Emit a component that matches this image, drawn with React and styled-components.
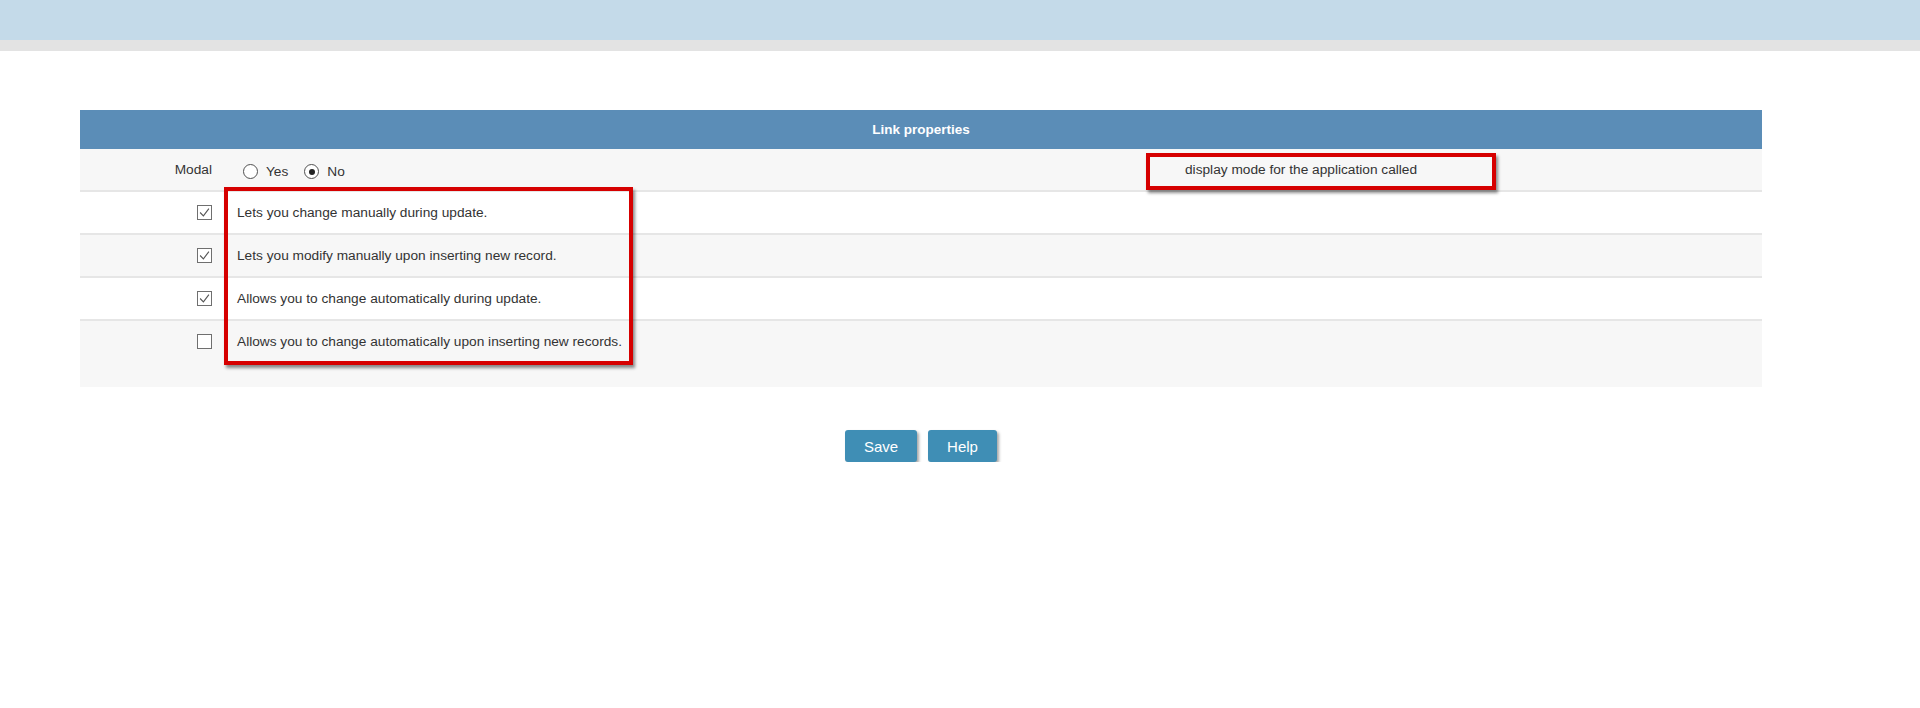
import React from 'react'
import styled, { createGlobalStyle } from 'styled-components'

const GlobalStyle = createGlobalStyle`
  body {
    margin: 0;
    background: #ffffff;
    font-family: 'Liberation Sans', Arial, sans-serif;
    color: #333333;
  }
`

const TopBar = styled.div`
  height: 40px;
  background: #c4dae9;
`

const SubBar = styled.div`
  height: 11px;
  background: #e3e3e3;
`

const Page = styled.div`
  padding: 59px 158px 0 80px;
`

const TableWrap = styled.div`
  position: relative;
`

const Header = styled.div`
  height: 39px;
  display: flex;
  align-items: center;
  justify-content: center;
  background: #5b8db7;
  color: #ffffff;
  font-size: 13.5px;
  font-weight: bold;
`

const Row = styled.div`
  display: grid;
  grid-template-columns: ${(p) => (p.wide ? '144px 1fr 590px' : '144px 1fr')};
  align-items: start;
  background: ${(p) => (p.shaded ? '#f7f7f7' : '#ffffff')};
  border-bottom: ${(p) => (p.last ? 'none' : '2px solid #e6e6e6')};
  min-height: ${(p) => p.height}px;
  box-sizing: border-box;
  font-size: 13.7px;
`

const LabelCell = styled.div`
  display: flex;
  justify-content: flex-end;
  align-items: center;
  padding: 12px 12px 0 0;
  height: 16px;
`

const Cell = styled.div`
  display: flex;
  align-items: center;
  padding: 12px 0 0 13px;
  height: 16px;
`

const Radio = styled.label`
  display: flex;
  align-items: center;
  margin-right: 10px;
  padding-top: 5px;
`

const Circle = styled.span`
  width: 15px;
  height: 15px;
  border: 1px solid #505050;
  border-radius: 50%;
  box-sizing: border-box;
  margin: 0 8px 0 6px;
  display: flex;
  align-items: center;
  justify-content: center;
  background: #fff;

  &::after {
    content: '';
    width: 6px;
    height: 6px;
    border-radius: 50%;
    background: ${(p) => (p.checked ? '#222' : 'transparent')};
  }
`

const Box = styled.span`
  width: 15px;
  height: 15px;
  border: 1px solid #6f6f6f;
  box-sizing: border-box;
  background: #fff;
  display: flex;
  align-items: center;
  justify-content: center;
`

const Note = styled.div`
  position: absolute;
  border: 4px solid #d60000;
  box-shadow: 2px 3px 3px rgba(0, 0, 0, 0.45);
  box-sizing: border-box;
  pointer-events: none;
`

const Buttons = styled.div`
  display: flex;
  justify-content: center;
  gap: 11px;
  margin-top: 43px;
`

const Button = styled.button`
  height: 32px;
  width: ${(p) => p.w}px;
  border: none;
  border-radius: 3px;
  background: #3f8eb5;
  color: #ffffff;
  font-family: 'Liberation Sans', Arial, sans-serif;
  font-size: 15px;
  box-shadow: 2px 2px 3px rgba(0, 0, 0, 0.35);
  padding: 0;
`

const Check = ({ checked }) => (
  <Box>
    {checked && (
      <svg width="11" height="11" viewBox="0 0 10 10">
        <polyline points="1,5 4,8 9,1.5" fill="none" stroke="#555" strokeWidth="1" />
      </svg>
    )}
  </Box>
)

const options = [
  { text: 'Lets you change manually during update.', checked: true },
  { text: 'Lets you modify manually upon inserting new record.', checked: true },
  { text: 'Allows you to change automatically during update.', checked: true },
  { text: 'Allows you to change automatically upon inserting new records.', checked: false }
]

export default function App() {
  return (
    <>
      <GlobalStyle />
      <TopBar />
      <SubBar />
      <Page>
        <TableWrap>
          <Header>Link properties</Header>
          <Row wide shaded height={43}>
            <LabelCell>Modal</LabelCell>
            <Cell>
              <Radio>
                <Circle />
                Yes
              </Radio>
              <Radio>
                <Circle checked />
                No
              </Radio>
            </Cell>
            <Cell>display mode for the application called</Cell>
          </Row>
          {options.map((o, i) => (
            <Row
              key={o.text}
              shaded={i % 2 === 1}
              last={i === options.length - 1}
              height={i === options.length - 1 ? 66 : 43}
            >
              <LabelCell>
                <Check checked={o.checked} />
              </LabelCell>
              <Cell>{o.text}</Cell>
            </Row>
          ))}
          <Note style={{ left: 144, top: 77, width: 409, height: 178 }} />
          <Note style={{ left: 1066, top: 43, width: 350, height: 37 }} />
        </TableWrap>
        <Buttons>
          <Button w={72}>Save</Button>
          <Button w={69}>Help</Button>
        </Buttons>
      </Page>
    </>
  )
}
